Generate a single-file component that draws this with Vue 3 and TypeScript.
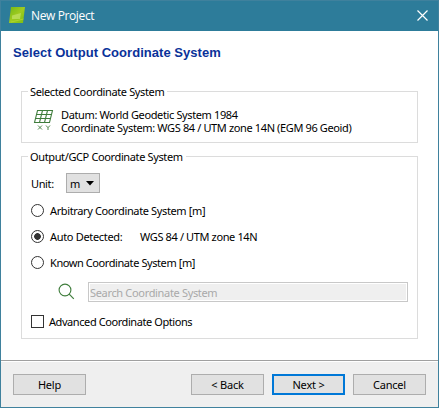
<script setup lang="ts">
import { ref } from 'vue'

type Choice = 'arbitrary' | 'auto' | 'known'
const choice = ref<Choice>('auto')
const advanced = ref(false)
const search = ref('')
</script>

<template>
  <div class="window">
    <header class="titlebar">
      <svg class="logo" width="16" height="16" viewBox="0 0 16 16">
        <defs>
          <linearGradient id="leaf" x1="0" y1="0" x2="1" y2="1">
            <stop offset="0" stop-color="#74b817" />
            <stop offset="0.5" stop-color="#9fcb20" />
            <stop offset="1" stop-color="#7bbd12" />
          </linearGradient>
        </defs>
        <path d="M2 0H16L14 16H0Z" fill="url(#leaf)" />
        <path d="M3 8.5L12 6L11 12H3Z" fill="#c8e36e" opacity=".65" />
        <path d="M2 15L14.5 12" stroke="#b9d936" stroke-width="1" opacity=".7" />
      </svg>
      <span class="title">New Project</span>
      <svg class="close" width="11" height="11" viewBox="0 0 11 11">
        <path d="M.5 .5L10.5 10.5M10.5 .5L.5 10.5" stroke="#fff" stroke-width="1.2" />
      </svg>
    </header>

    <main class="body">
      <h1 class="heading">Select Output Coordinate System</h1>

      <section class="group selected">
        <h2 class="legend"><span>Selected Coordinate System</span></h2>
        <div class="summary">
          <svg class="grid-icon" width="21" height="22" viewBox="0 0 21 22" fill="none" stroke="#3f7d3c">
            <path d="M4.5 1.5H19.5L16.5 13.5H1.5ZM3.5 5.5H18.5M2.5 9.5H17.5M9.5 1.5L6.5 13.5M14.5 1.5L11.5 13.5" stroke-width="1.05" />
            <path d="M5 16.5L9 20.5M9 16.5L5 20.5M13 16.5L15 18.7L17 16.5M15 18.7V21" stroke-width=".9" />
          </svg>
          <div class="lines">
            <div>Datum: World Geodetic System 1984</div>
            <div>Coordinate System: WGS 84 / UTM zone 14N (EGM 96 Geoid)</div>
          </div>
        </div>
      </section>

      <section class="group output">
        <h2 class="legend"><span>Output/GCP Coordinate System</span></h2>
        <div class="unit">
          <span class="unit-label">Unit:</span>
          <button class="select" type="button">
            <span>m</span>
            <svg width="8" height="5" viewBox="0 0 8 5"><path d="M0 0H8L4 4.6Z" fill="#000" /></svg>
          </button>
        </div>
        <label class="option">
          <input v-model="choice" class="radio" type="radio" value="arbitrary" />
          <span>Arbitrary Coordinate System [m]</span>
        </label>
        <label class="option">
          <input v-model="choice" class="radio" type="radio" value="auto" />
          <span class="auto">Auto Detected:</span>
          <span>WGS 84 / UTM zone 14N</span>
        </label>
        <label class="option">
          <input v-model="choice" class="radio" type="radio" value="known" />
          <span class="tight">Known Coordinate System [m]</span>
        </label>
        <div class="search">
          <svg width="17" height="17" viewBox="0 0 17 17" fill="none" stroke="#3f7d3c">
            <circle cx="7" cy="7" r="5.9" stroke-width="1.1" />
            <path d="M11.2 11.2L15.8 15.8" stroke-width="1.2" />
          </svg>
          <input v-model="search" class="field" placeholder="Search Coordinate System" disabled />
        </div>
        <label class="option">
          <input v-model="advanced" class="check" type="checkbox" />
          <span class="tight">Advanced Coordinate Options</span>
        </label>
      </section>
    </main>

    <footer class="footer">
      <button class="btn help" type="button">Help</button>
      <button class="btn" type="button">&lt; Back</button>
      <button class="btn primary" type="button">Next &gt;</button>
      <button class="btn" type="button">Cancel</button>
    </footer>
  </div>
</template>

<style>
body { margin: 0; }
</style>

<style scoped>
* { box-sizing: border-box; }
.window {
  width: 439px; height: 408px; display: flex; flex-direction: column;
  border: 1px solid #3f819d; background: #fff; color: #000;
  font: 11px/13px "Noto Sans", sans-serif; letter-spacing: -0.37px; white-space: nowrap;
}
.titlebar { height: 30px; display: flex; align-items: center; padding: 0 10px 2px 8px; background: #2d7c9a; color: #fff; }
.title { margin: 2px 0 0 6px; flex: 1; font: 12px/16px "Open Sans", sans-serif; letter-spacing: -0.38px; }
.close { margin-top: 1px; }
.body { flex: 1; padding: 13px 20px 0; }
.heading { margin: 1px 0 30px -8px; height: 16px; font: bold 13px/16px "Liberation Sans", sans-serif; letter-spacing: 0.04px; color: #0a3299; }
.group { border: 1px solid #dcdcdc; }
.selected { height: 52px; margin-bottom: 13px; }
.output { height: 183px; }
.legend { display: flex; margin: -7px 0 0 6px; height: 13px; font-size: 11px; font-weight: 400; }
.legend span { background: #fff; padding: 0 3px 0 2px; }
.summary { display: flex; padding: 10px 0 0 11px; }
.grid-icon { margin-top: 1px; }
.lines { margin: 0 0 0 7px; }
.unit { display: flex; align-items: center; height: 20px; margin: 10px 0 0 9px; }
.unit-label { width: 35px; }
.select {
  width: 34px; height: 20px; display: flex; justify-content: space-between; align-items: center;
  padding: 0 5px 0 3px; border: 1px solid #adadad; background: #e1e1e1; font: inherit; color: inherit;
}
.option { display: flex; align-items: center; height: 13px; margin: 13px 0 0 9px; }
.unit + .option { margin-top: 11px; }
.radio, .check { appearance: none; flex: none; width: 13px; height: 13px; margin: 0 6px 0 0; border: 1px solid #333; background: #fff; }
.radio { border-radius: 50%; }
.radio:checked { background: radial-gradient(circle, #333 0 3px, #fff 3.7px); }
.auto { width: 90px; letter-spacing: -0.32px; }
.tight { letter-spacing: -0.42px; }
.search { display: flex; height: 20px; margin: 13px 0 0 36px; }
.search svg { margin-top: 1px; }
.field {
  width: 320px; height: 20px; margin-left: 13px; padding: 1px 1px 0;
  border: 1px solid #c8c8c8; box-shadow: inset 0 0 0 1px #fff; background: #efefef; font: inherit; letter-spacing: -0.33px;
}
.field::placeholder { color: #a9a9a9; opacity: 1; }
.check { margin-right: 5px; }
.footer { height: 47px; display: flex; gap: 8px; padding: 13px 12px 0; border-top: 1px solid #a0a0a0; box-shadow: inset 0 1px #fff; background: #efefef; }
.btn { width: 73px; height: 21px; padding: 0; border: 1px solid #adadad; background: #e1e1e1; font: inherit; letter-spacing: -0.2px; color: inherit; }
.help { margin-right: auto; }
.primary { border: 2px solid #0078d7; }
</style>
